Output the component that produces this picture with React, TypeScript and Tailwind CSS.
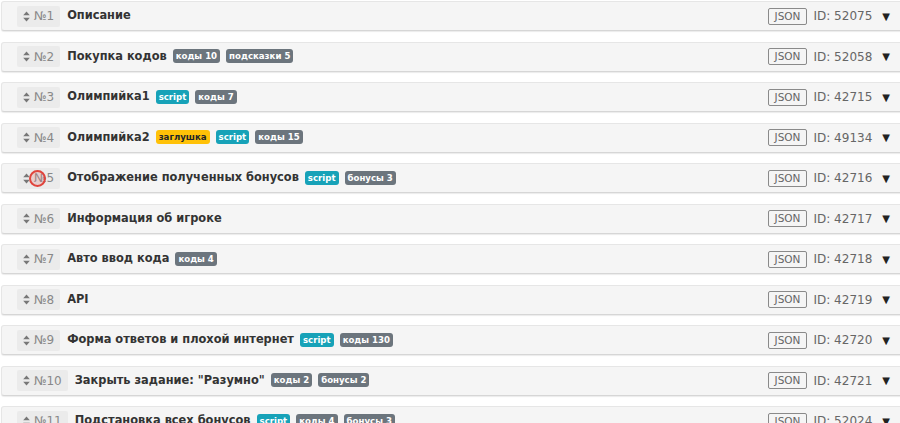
import React from "react"

type Badge = { text: string; kind: "gray" | "info" | "warn" }

type Level = { n: number; title: string; id: number; badges: Badge[] }

const levels: Level[] = [
  { n: 1, title: "Описание", id: 52075, badges: [] },
  { n: 2, title: "Покупка кодов", id: 52058, badges: [{ text: "коды 10", kind: "gray" }, { text: "подсказки 5", kind: "gray" }] },
  { n: 3, title: "Олимпийка1", id: 42715, badges: [{ text: "script", kind: "info" }, { text: "коды 7", kind: "gray" }] },
  { n: 4, title: "Олимпийка2", id: 49134, badges: [{ text: "заглушка", kind: "warn" }, { text: "script", kind: "info" }, { text: "коды 15", kind: "gray" }] },
  { n: 5, title: "Отображение полученных бонусов", id: 42716, badges: [{ text: "script", kind: "info" }, { text: "бонусы 3", kind: "gray" }] },
  { n: 6, title: "Информация об игроке", id: 42717, badges: [] },
  { n: 7, title: "Авто ввод кода", id: 42718, badges: [{ text: "коды 4", kind: "gray" }] },
  { n: 8, title: "API", id: 42719, badges: [] },
  { n: 9, title: "Форма ответов и плохой интернет", id: 42720, badges: [{ text: "script", kind: "info" }, { text: "коды 130", kind: "gray" }] },
  { n: 10, title: "Закрыть задание: \"Разумно\"", id: 42721, badges: [{ text: "коды 2", kind: "gray" }, { text: "бонусы 2", kind: "gray" }] },
  { n: 11, title: "Подстановка всех бонусов", id: 52024, badges: [{ text: "script", kind: "info" }, { text: "коды 4", kind: "gray" }, { text: "бонусы 3", kind: "gray" }] },
]

const badgeClass = {
  gray: "bg-[#6c757d] text-white",
  info: "bg-[#17a2b8] text-white",
  warn: "bg-[#ffc107] text-[#212529]",
}

function SortIcon() {
  return (
    <svg width="7" height="11" viewBox="0 0 7 11" className="shrink-0">
      <path d="M3.5 0.5 L6.8 4.3 L0.2 4.3 Z" fill="#777" />
      <path d="M3.5 10.5 L6.8 6.7 L0.2 6.7 Z" fill="#777" />
    </svg>
  )
}

function LevelRow({ level }: { level: Level }) {
  return (
    <div className="flex items-center h-[30px] mb-[10.5px] ml-[1px] -mr-[4px] pl-[15px] pr-[13px] bg-[#f5f5f5] border border-[#e6e6e6] border-b-[#d6d6d6] rounded-[3px] shadow-[0_1px_1px_rgba(0,0,0,0.08)]">
      <div className="relative flex items-center gap-[4px] h-[21px] pl-[6px] pr-[6px] bg-[#ebebeb] rounded-[2px] text-[12px] text-[#888]">
        <SortIcon />
        <span>№{level.n}</span>
        {level.n === 5 && (
          <span className="absolute left-[12px] top-[2px] w-[17px] h-[17px] rounded-full border-2 border-[#e0443c] bg-[rgba(220,120,120,0.25)]" />
        )}
      </div>
      <div className="ml-[7px] flex items-center gap-[4px]">
        <span className="text-[11.4px] font-bold text-[#333]">{level.title}</span>
        {level.badges.map((b, i) => (
          <span
            key={i}
            className={`ml-[2px] px-[3px] h-[14px] leading-[14px] rounded-[3px] text-[8.6px] font-bold ${badgeClass[b.kind]}`}
          >
            {b.text}
          </span>
        ))}
      </div>
      <div className="ml-auto flex items-center">
        <span className="h-[17px] px-[6px] leading-[15px] border border-[#8a8a8a] rounded-[2px] text-[10.5px] text-[#666]">JSON</span>
        <span className="ml-[6px] text-[12px] text-[#666]">ID: {level.id}</span>
        <span className="ml-[10px] text-[10px] text-[#222]">▼</span>
      </div>
    </div>
  )
}

export default function App() {
  return (
    <div
      className="w-[900px] h-[423px] overflow-hidden bg-white pt-[1px]"
      style={{ fontFamily: '"DejaVu Sans", Verdana, sans-serif' }}
    >
      {levels.map((l) => (
        <LevelRow key={l.n} level={l} />
      ))}
    </div>
  )
}
